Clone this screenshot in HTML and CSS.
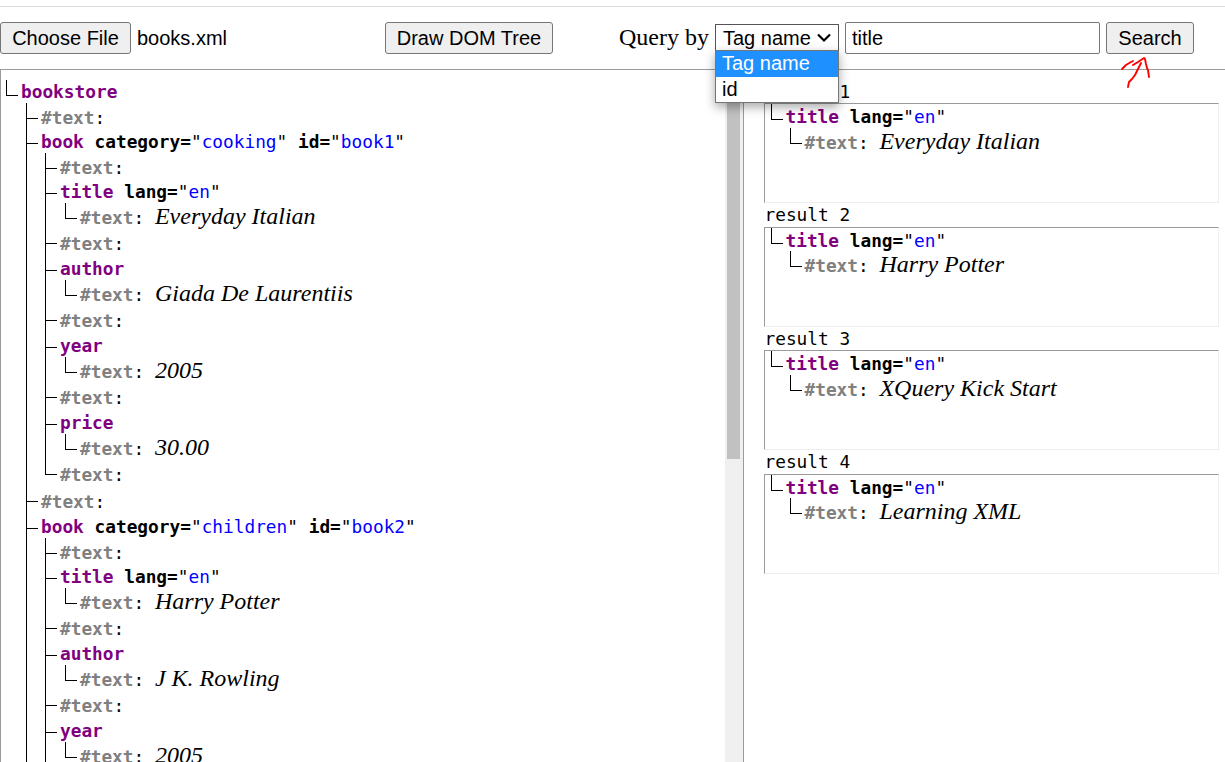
FILE: index.html
```html
<!DOCTYPE html>
<html lang="en">
<head>
<meta charset="utf-8">
<title>DOM Tree</title>
<link rel="stylesheet" href="styles.css">
</head>
<body>
<header class="toolbar">
  <button class="btn choose">Choose File</button>
  <span class="filename">books.xml</span>
  <button class="btn draw">Draw DOM Tree</button>
  <span class="query">Query by</span>
  <div class="select">
    <span>Tag name</span>
    <svg class="chevron" width="16" height="10" viewBox="0 0 16 10"><path d="M2 1.5 L8 7.5 L14 1.5" fill="none" stroke="#000" stroke-width="2.2"/></svg>
    <div class="menu">
      <div class="option selected">Tag name</div>
      <div class="option">id</div>
    </div>
  </div>
  <input class="term" type="text" value="title">
  <button class="btn search">Search</button>
  <svg class="arrow" width="34" height="36" viewBox="0 0 34 36"><path d="M3 14 L7 10 L12 7 L14 6 M14 10 L19 7 L22 5 L25 3 L26 4 L27 9 L28 13 L29 15 L30 22 M22 8 L19 14 L16 20 L13 24 L10 27 L9 32" fill="none" stroke="#f00" stroke-width="1.9" stroke-linecap="round" stroke-linejoin="round"/></svg>
</header>
<main class="panels">
  <section class="source">
    <ul class="tree">
      <li class="last"><div class="row root"><b class="tag">bookstore</b></div>
        <ul class="first-level">
          <li><div class="row text"><b class="hash">#text</b>:</div></li>
          <li><div class="row"><b class="tag">book</b> <b>category=</b>"<span class="val">cooking</span>" <b>id=</b>"<span class="val">book1</span>"</div>
            <ul class="second-level">
              <li><div class="row text"><b class="hash">#text</b>:</div></li>
              <li><div class="row"><b class="tag">title</b> <b>lang=</b>"<span class="val">en</span>"</div>
                <ul><li class="last"><div class="row text"><b class="hash">#text</b>: <i>Everyday Italian</i></div></li></ul></li>
              <li><div class="row text loose"><b class="hash">#text</b>:</div></li>
              <li><div class="row"><b class="tag">author</b></div>
                <ul><li class="last"><div class="row text"><b class="hash">#text</b>: <i>Giada De Laurentiis</i></div></li></ul></li>
              <li><div class="row text loose"><b class="hash">#text</b>:</div></li>
              <li><div class="row"><b class="tag">year</b></div>
                <ul><li class="last"><div class="row text"><b class="hash">#text</b>: <i>2005</i></div></li></ul></li>
              <li><div class="row text loose"><b class="hash">#text</b>:</div></li>
              <li><div class="row"><b class="tag">price</b></div>
                <ul><li class="last"><div class="row text"><b class="hash">#text</b>: <i>30.00</i></div></li></ul></li>
              <li class="last"><div class="row text loose"><b class="hash">#text</b>:</div></li>
            </ul></li>
          <li><div class="row text loose"><b class="hash">#text</b>:</div></li>
          <li><div class="row"><b class="tag">book</b> <b>category=</b>"<span class="val">children</span>" <b>id=</b>"<span class="val">book2</span>"</div>
            <ul class="second-level">
              <li><div class="row text"><b class="hash">#text</b>:</div></li>
              <li><div class="row"><b class="tag">title</b> <b>lang=</b>"<span class="val">en</span>"</div>
                <ul><li class="last"><div class="row text"><b class="hash">#text</b>: <i>Harry Potter</i></div></li></ul></li>
              <li><div class="row text loose"><b class="hash">#text</b>:</div></li>
              <li><div class="row"><b class="tag">author</b></div>
                <ul><li class="last"><div class="row text"><b class="hash">#text</b>: <i>J K. Rowling</i></div></li></ul></li>
              <li><div class="row text loose"><b class="hash">#text</b>:</div></li>
              <li><div class="row"><b class="tag">year</b></div>
                <ul><li class="last"><div class="row text"><b class="hash">#text</b>: <i>2005</i></div></li></ul></li>
            </ul></li>
        </ul></li>
    </ul>
    <div class="scrollbar"><div class="thumb"></div></div>
  </section>
  <section class="results">
    <div class="label">result 1</div>
    <div class="box"><ul class="tree"><li class="last"><div class="row root"><b class="tag">title</b> <b>lang=</b>"<span class="val">en</span>"</div>
      <ul><li class="last"><div class="row text"><b class="hash">#text</b>: <i>Everyday Italian</i></div></li></ul></li></ul></div>
    <div class="label">result 2</div>
    <div class="box"><ul class="tree"><li class="last"><div class="row root"><b class="tag">title</b> <b>lang=</b>"<span class="val">en</span>"</div>
      <ul><li class="last"><div class="row text"><b class="hash">#text</b>: <i>Harry Potter</i></div></li></ul></li></ul></div>
    <div class="label">result 3</div>
    <div class="box"><ul class="tree"><li class="last"><div class="row root"><b class="tag">title</b> <b>lang=</b>"<span class="val">en</span>"</div>
      <ul><li class="last"><div class="row text"><b class="hash">#text</b>: <i>XQuery Kick Start</i></div></li></ul></li></ul></div>
    <div class="label">result 4</div>
    <div class="box"><ul class="tree"><li class="last"><div class="row root"><b class="tag">title</b> <b>lang=</b>"<span class="val">en</span>"</div>
      <ul><li class="last"><div class="row text"><b class="hash">#text</b>: <i>Learning XML</i></div></li></ul></li></ul></div>
  </section>
</main>
</body>
</html>
```
FILE: styles.css
```css
* { box-sizing: border-box; }
html, body { height: 100%; overflow: hidden; }
body {
  margin: 0;
  padding-top: 6px;
  background: #fff;
  color: #000;
  font-family: "Liberation Serif", serif;
  display: flex;
  flex-direction: column;
}
.toolbar {
  position: relative;
  flex: none;
  height: 63px;
  border-top: 1px solid #dcdcdc;
  padding-top: 15px;
  display: flex;
  align-items: flex-start;
  font: 20px/32px "Liberation Sans", Arial, sans-serif;
}
.btn {
  height: 32px;
  padding: 0;
  border: 1px solid #767676;
  border-radius: 3px;
  background: #efefef;
  color: #000;
  font: 20px/30px "Liberation Sans", Arial, sans-serif;
}
.choose { width: 131px; }
.filename { width: 254px; padding-left: 6px; }
.draw { width: 168px; }
.query {
  width: 162px;
  padding-left: 66px;
  white-space: nowrap;
  font: 24px/31px "Liberation Serif", "Times New Roman", serif;
}
.select {
  position: relative;
  width: 124px;
  height: 27px;
  margin-top: 2px;
  padding: 0 6px 0 7px;
  border: 1px solid #555;
  line-height: 26px;
  display: flex;
  justify-content: space-between;
  align-items: center;
  white-space: nowrap;
}
.menu {
  position: absolute;
  z-index: 5;
  left: -1px;
  top: 25px;
  width: 124px;
  height: 53px;
  border: 1px solid #767676;
  background: #fff;
  box-shadow: 0 4px 10px rgba(0, 0, 0, .35);
}
.option { height: 26px; padding-left: 6px; line-height: 24px; }
.selected { background: #1e90ff; color: #fff; }
.term {
  width: 255px;
  height: 32px;
  margin: 0 6px;
  padding: 0 6px;
  border: 1px solid #767676;
  border-radius: 2px;
  background: #fff;
  font: 20px "Liberation Sans", Arial, sans-serif;
}
.search { width: 88px; }
.arrow { position: absolute; left: 1119px; top: 48px; z-index: 4; }

.panels { flex: 1; min-height: 0; display: flex; border-top: 1px solid #9a9a9a; }
.panels, .label { font: 17.8px "DejaVu Sans Mono", monospace; }
.source {
  width: 743px;
  border-left: 1px solid #9a9a9a;
  display: flex;
  justify-content: space-between;
  overflow: hidden;
}
.source > .tree { padding: 10px 0 0 5px; }
.scrollbar { width: 18px; background: #f0f0f0; padding: 0 3px 0 2px; }
.thumb { height: 389px; background: #c1c1c1; }
.results { flex: 1; padding: 10px 6px 0 20px; border-left: 1px solid #9a9a9a; }

ul { list-style: none; margin: 0; padding: 0 0 0 20px; }
.second-level { padding-left: 19px; }
.tree li {
  background:
    linear-gradient(#000, #000) 0 0 / 1px 100% no-repeat,
    linear-gradient(#000, #000) 0 15px / 12px 1px no-repeat;
}
.tree li.last {
  background:
    linear-gradient(#000, #000) 0 0 / 1px 15px no-repeat,
    linear-gradient(#000, #000) 0 15px / 12px 1px no-repeat;
}
.row { height: 25px; padding-left: 15px; line-height: 28px; white-space: nowrap; }
.row.root { height: 23px; line-height: 24px; }
.row.text { line-height: 30px; }
.row.loose { height: 27px; line-height: 32px; }
.tag { color: purple; }
.hash { color: #808080; }
.val { color: #00f; }
i { font: italic 24px/0 "Liberation Serif", "Times New Roman", serif; }

.label { height: 23.3px; padding-left: 0.5px; line-height: 23px; }
.box {
  height: 100.2px;
  border: 1px solid #eee;
  border-top-color: #9a9a9a;
  border-left-color: #9a9a9a;
}
.box > .tree { padding-left: 6px; }
.box .row { padding-left: 14.5px; }
.box .row.root { line-height: 25px; height: 23.25px; }
.box .row.text { line-height: 29px; }
.box .tree ul { padding-left: 19px; }
```
